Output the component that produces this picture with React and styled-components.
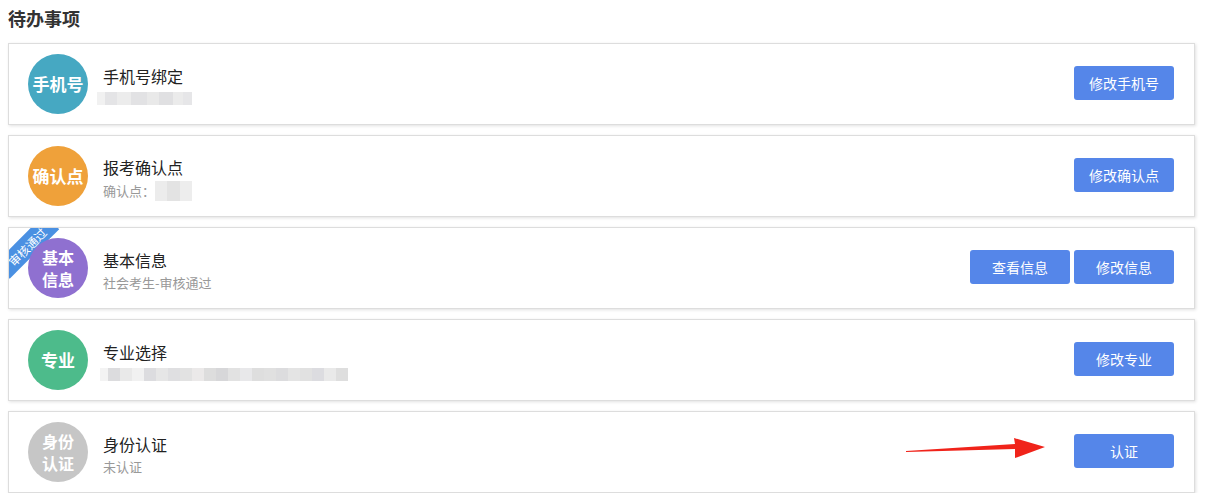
import React from 'react';
import styled, { createGlobalStyle } from 'styled-components';

const GlobalStyle = createGlobalStyle`
  body {
    margin: 0;
    background: #fff;
    font-family: "Noto Sans CJK SC", "Noto Sans", sans-serif;
    color: #333;
  }
`;

const Page = styled.div`
  padding: 4px 13px 0 8px;
  position: relative;
`;

const Title = styled.h2`
  margin: 0 0 11px;
  font-size: 18px;
  line-height: 28px;
  font-weight: bold;
  color: #333;
`;

const List = styled.div`
  display: flex;
  flex-direction: column;
  gap: 10px;
`;

const Card = styled.div`
  position: relative;
  overflow: hidden;
  height: 80px;
  border: 1px solid #ddd;
  box-shadow: 1px 1px 3px rgba(0, 0, 0, 0.12);
  display: flex;
  align-items: center;
  padding: 0 20px 0 19px;
  background: #fff;
`;

const Circle = styled.div`
  width: 60px;
  height: 60px;
  border-radius: 50%;
  background: ${(p) => p.color};
  color: #fff;
  font-weight: bold;
  font-size: ${(p) => (p.small ? '16px' : '17px')};
  line-height: 22px;
  display: flex;
  align-items: center;
  justify-content: center;
  text-align: center;
  flex-shrink: 0;
  white-space: pre-line;
  position: relative;
  z-index: 1;
`;

const Info = styled.div`
  margin-left: 15px;
  padding-top: 4px;
  flex: 1;
  display: flex;
  flex-direction: column;
`;

const Name = styled.div`
  font-size: 16px;
  line-height: 22px;
  color: #222;
`;

const Sub = styled.div`
  font-size: 13px;
  line-height: 18px;
  color: #999;
  margin-top: 3px;
  display: flex;
  align-items: center;
  min-height: 18px;
`;

const Mosaic = styled.div`
  display: flex;
  height: ${(p) => p.h}px;
  margin-left: ${(p) => p.offset || 0}px;
`;

const Tile = styled.span`
  width: ${(p) => p.w}px;
  height: 100%;
  background: ${(p) => p.c};
`;

const Actions = styled.div`
  display: flex;
  gap: 4px;
  margin-top: -2px;
`;

const Button = styled.button`
  width: 100px;
  height: 34px;
  border: none;
  border-radius: 3px;
  background: #5586e9;
  color: #fff;
  font-family: inherit;
  font-size: 14px;
  cursor: pointer;
`;

const Ribbon = styled.div`
  position: absolute;
  top: 8px;
  left: -17px;
  width: 70px;
  height: 21px;
  background: #4a90e2;
  color: #fff;
  font-size: 12px;
  line-height: 21px;
  text-align: center;
  transform: rotate(-45deg);
`;

const Arrow = styled.svg`
  position: absolute;
  left: 905px;
  top: 436px;
`;

const mosaic1 = [
  [8, '#f1f1f1'], [12, '#e4e4e6'], [14, '#ececec'], [16, '#e2e2e4'], [12, '#e9e9e9'],
  [14, '#e0e0e2'], [10, '#ebebeb'], [9, '#e6e6e8'],
];
const mosaic2 = [[12, '#ececec'], [13, '#e3e3e3'], [12, '#ededed']];
const mosaic4 = [
  [8, '#f3f3f3'], [12, '#dcdcde'], [12, '#e9e9e9'], [12, '#f1f1f1'], [12, '#dcdcdf'],
  [12, '#e6e6e6'], [12, '#dfdfe1'], [12, '#e2e2e2'], [12, '#ebe9e9'], [12, '#dddddd'],
  [12, '#d7d7d9'], [12, '#e2e2e2'], [12, '#e8e8ea'], [12, '#dedede'], [12, '#e0e0e0'],
  [12, '#dcdcde'], [12, '#e4e4e4'], [12, '#e1e1e1'], [12, '#dcdce0'], [12, '#e9e9e9'],
  [12, '#dedede'],
];

const renderMosaic = (tiles, h, offset) => (
  <Mosaic h={h} offset={offset}>
    {tiles.map(([w, c], i) => (
      <Tile key={i} w={w} c={c} />
    ))}
  </Mosaic>
);

const App = () => (
  <>
    <GlobalStyle />
    <Page>
      <Title>待办事项</Title>
      <List>
        <Card>
          <Circle color="#46a8c2">手机号</Circle>
          <Info>
            <Name>手机号绑定</Name>
            <Sub>{renderMosaic(mosaic1, 13, -6)}</Sub>
          </Info>
          <Actions>
            <Button>修改手机号</Button>
          </Actions>
        </Card>

        <Card>
          <Circle color="#efa13a">确认点</Circle>
          <Info>
            <Name>报考确认点</Name>
            <Sub>
              确认点：{renderMosaic(mosaic2, 20, 0)}
            </Sub>
          </Info>
          <Actions>
            <Button>修改确认点</Button>
          </Actions>
        </Card>

        <Card>
          <Ribbon>审核通过</Ribbon>
          <Circle color="#8f70d0" small>{'基本\n信息'}</Circle>
          <Info>
            <Name>基本信息</Name>
            <Sub>社会考生-审核通过</Sub>
          </Info>
          <Actions>
            <Button>查看信息</Button>
            <Button>修改信息</Button>
          </Actions>
        </Card>

        <Card>
          <Circle color="#4dbb8b">专业</Circle>
          <Info>
            <Name>专业选择</Name>
            <Sub>{renderMosaic(mosaic4, 13, -3)}</Sub>
          </Info>
          <Actions>
            <Button>修改专业</Button>
          </Actions>
        </Card>

        <Card>
          <Circle color="#c6c6c6" small>{'身份\n认证'}</Circle>
          <Info>
            <Name>身份认证</Name>
            <Sub>未认证</Sub>
          </Info>
          <Actions>
            <Button>认证</Button>
          </Actions>
        </Card>
      </List>
      <Arrow width="145" height="26" viewBox="0 0 145 26">
        <polygon points="1,15 110,8 109,2 140,11 110,22 110,13 1,16" fill="#f0231a" />
      </Arrow>
    </Page>
  </>
);

export default App;
